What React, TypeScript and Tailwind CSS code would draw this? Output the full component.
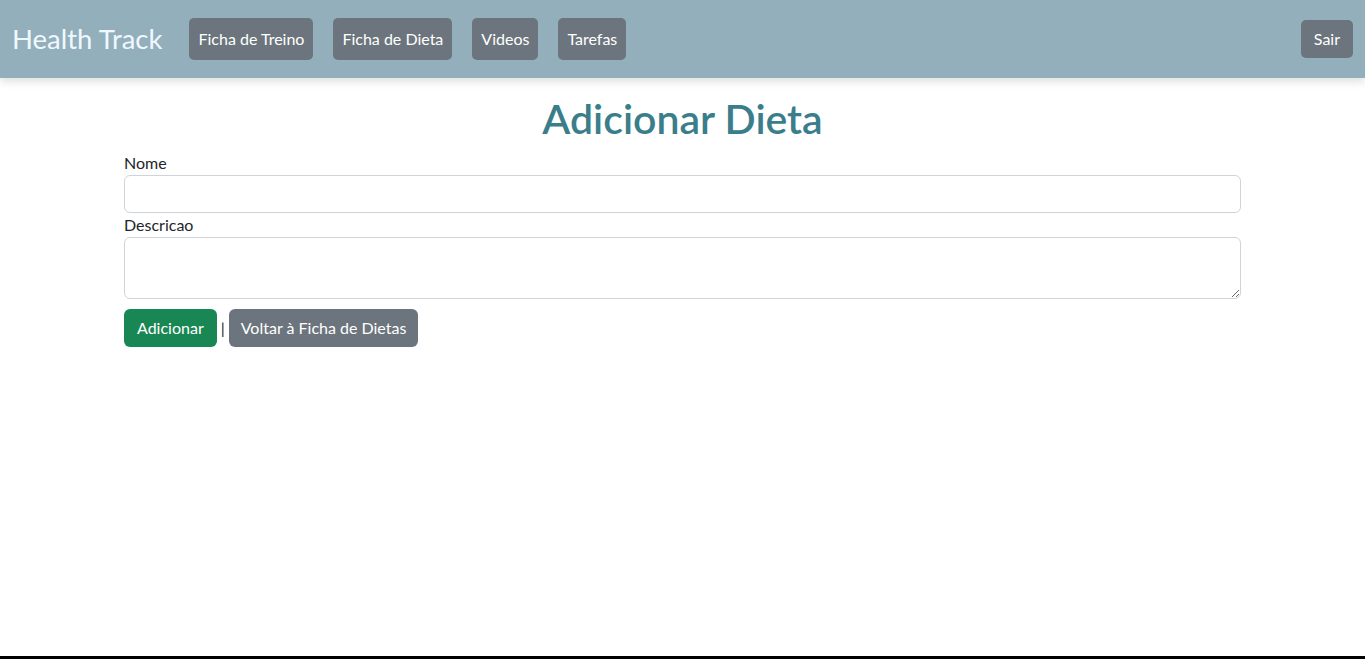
const navLinks = ["Ficha de Treino", "Ficha de Dieta", "Videos", "Tarefas"];

export default function App() {
  return (
    <div className="flex h-[659px] flex-col bg-white font-['Lato',sans-serif] text-[16px] text-[#212529]">
      <header className="relative z-10 flex h-[78px] items-center bg-[#92afbb] px-3 shadow-[0_4px_8px_rgba(0,0,0,0.12)]">
        <a href="#" className="mr-[27px] font-['Lato',sans-serif] text-[27.5px] leading-none text-[#f0f8ff]">
          Health Track
        </a>
        <nav className="flex items-center gap-5">
          {navLinks.map((label) => (
            <a
              key={label}
              href="#"
              className="flex h-[42px] items-center rounded-[5px] bg-[#6c757d] px-[9px] text-white"
            >
              {label}
            </a>
          ))}
        </nav>
        <button
          type="button"
          className="ml-auto flex h-[38px] items-center rounded-[5px] bg-[#6c757d] px-[13px] text-white"
        >
          Sair
        </button>
      </header>

      <main className="mx-auto w-[1141px] px-3 pt-[17px]">
        <h1 className="mb-2 text-center text-[41px] font-semibold leading-[48px] text-[#3b7e8b]">
          Adicionar Dieta
        </h1>
        <form>
          <label className="block leading-6">Nome</label>
          <input
            type="text"
            className="block h-[38px] w-full rounded-[6px] border border-[#ced4da] px-3 outline-none"
          />
          <label className="block leading-6">Descricao</label>
          <textarea
            rows={2}
            className="block h-[62px] w-full rounded-[6px] border border-[#ced4da] px-3 py-1.5 outline-none"
          />
          <div className="mt-[10px] flex items-center">
            <button
              type="button"
              className="h-[38px] rounded-[6px] bg-[#198754] px-[13px] text-white"
            >
              Adicionar
            </button>
            <span className="mx-[4px] leading-6 text-[#212529]">|</span>
            <button
              type="button"
              className="h-[38px] rounded-[6px] bg-[#6c757d] px-3 text-white"
            >
              Voltar à Ficha de Dietas
            </button>
          </div>
        </form>
      </main>

      <div className="mt-auto h-[3px] bg-black" />
    </div>
  );
}
